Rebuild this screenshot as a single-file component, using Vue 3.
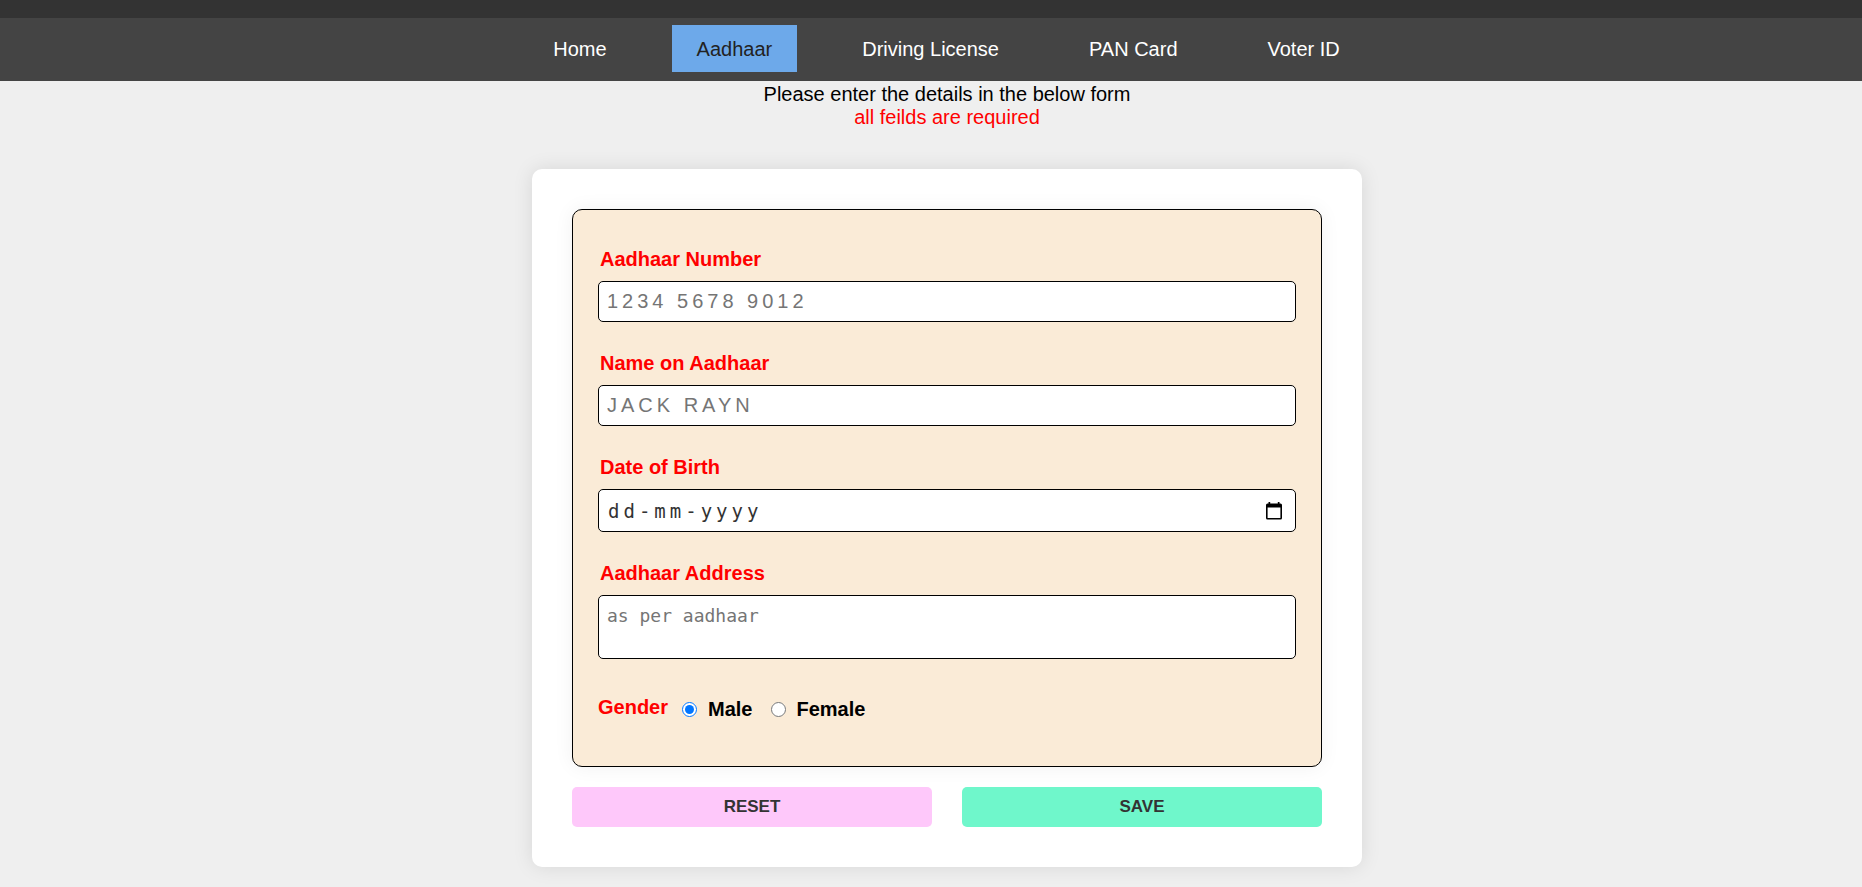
<script setup>
import { ref } from 'vue'

const links = ['Home', 'Aadhaar', 'Driving License', 'PAN Card', 'Voter ID']
const active = ref('Aadhaar')
const blank = { number: '', name: '', dob: '', address: '', gender: 'male' }
const form = ref({ ...blank })

function reset() {
  form.value = { ...blank }
}
</script>

<template>
  <div class="page">
    <header class="strip"></header>
    <nav class="nav">
      <a
        v-for="link in links"
        :key="link"
        href="#"
        class="nav-link"
        :class="{ active: link === active }"
        @click.prevent="active = link"
      >{{ link }}</a>
    </nav>

    <main class="content">
      <div class="intro">
        <p>Please enter the details in the below form</p>
        <p class="required">all feilds are required</p>
      </div>

      <form class="card" @submit.prevent>
        <div class="panel">
          <div class="field">
            <label for="number">Aadhaar Number</label>
            <input id="number" v-model="form.number" class="spaced" type="text" placeholder="1234 5678 9012" />
          </div>
          <div class="field">
            <label for="name">Name on Aadhaar</label>
            <input id="name" v-model="form.name" class="spaced" type="text" placeholder="JACK RAYN" />
          </div>
          <div class="field">
            <label for="dob">Date of Birth</label>
            <div class="date-box">
              <input id="dob" v-model="form.dob" class="date" type="text" placeholder="dd-mm-yyyy" />
              <button type="button" class="picker" aria-label="Show date picker">
                <svg width="20" height="20" viewBox="0 0 20 20">
                  <path d="M4.500 1h1.700v1.500h7.600V1h1.700v1.500h1A1.500 1.500 0 0 1 18 4v13a1.500 1.500 0 0 1-1.500 1.500h-13A1.500 1.500 0 0 1 2 17V4a1.500 1.500 0 0 1 1.500-1.500h1zM3.600 6.500V17h12.800V6.500z" fill="#000" fill-rule="evenodd" />
                </svg>
              </button>
            </div>
          </div>
          <div class="field">
            <label for="address">Aadhaar Address</label>
            <textarea id="address" v-model="form.address" placeholder="as per aadhaar"></textarea>
          </div>
          <div class="gender" role="radiogroup" aria-labelledby="gender-title">
            <span id="gender-title" class="gender-title">Gender</span>
            <div class="options">
              <label class="option"><input v-model="form.gender" type="radio" name="gender" value="male" />Male</label>
              <label class="option"><input v-model="form.gender" type="radio" name="gender" value="female" />Female</label>
            </div>
          </div>
        </div>
        <div class="actions">
          <button type="button" class="reset" @click="reset">RESET</button>
          <button type="submit" class="save">SAVE</button>
        </div>
      </form>
    </main>
  </div>
</template>

<style>
body {
  background: #efefef;
}
</style>

<style scoped>
* {
  box-sizing: border-box;
}
.page {
  font-family: "Liberation Sans", Arial, sans-serif;
  font-size: 20px;
  line-height: 23px;
  color: #000;
}
.strip {
  height: 18px;
  background: #333;
}
.nav {
  display: flex;
  justify-content: center;
  gap: 40px;
  padding: 7px 0 9px 31px;
  background: #444;
}
.nav-link {
  padding: 13px 25px 11px;
  color: #fff;
  text-decoration: none;
}
.nav-link.active {
  background: #6da9ea;
  color: #222;
}
.content {
  padding: 2px 0 20px 32px;
}
.intro {
  text-align: center;
}
.intro p {
  margin: 0;
}
.intro .required {
  color: #f00;
}
.card {
  max-width: 830px;
  margin: 40px auto 0;
  padding: 40px;
  border-radius: 10px;
  background: #fff;
  box-shadow: 0 0 20px rgba(0, 0, 0, 0.1);
}
.panel {
  padding: 38px 25px 45px;
  border: 1px solid #000;
  border-radius: 10px;
  background: #faebd7;
  box-shadow: 0 0 20px rgba(0, 0, 0, 0.06);
}
.field {
  display: flex;
  flex-direction: column;
  gap: 10px;
  margin-bottom: 30px;
}
.field label {
  align-self: flex-start;
  margin-left: 2px;
  font-weight: 700;
  color: #f00;
}
.spaced,
.date-box,
textarea {
  display: block;
  width: 100%;
  margin: 0;
  border: 1px solid #000;
  border-radius: 5px;
  background: #fff;
  color: #333;
}
.spaced {
  height: 41px;
  padding: 0 8px;
  font: 20px "Liberation Sans", Arial, sans-serif;
  letter-spacing: 4px;
}
.date-box {
  display: flex;
  align-items: center;
  height: 43px;
  padding: 0 11px 0 9px;
}
.date {
  flex: 1;
  min-width: 0;
  padding: 0;
  border: 0;
  background: none;
  color: #333;
  font: 19px "DejaVu Sans Mono", monospace;
  letter-spacing: 4px;
}
.picker {
  display: flex;
  padding: 0;
  border: 0;
  background: none;
}
textarea {
  height: 64px;
  padding: 9px 8px;
  resize: none;
  font: 18px "DejaVu Sans Mono", monospace;
}
::placeholder {
  color: #757575;
  opacity: 1;
}
.date::placeholder {
  color: #333;
}
.gender {
  display: flex;
  gap: 14px;
  padding-top: 7px;
  font-weight: 700;
}
.gender-title {
  color: #f00;
}
.options {
  display: flex;
  gap: 18px;
  padding-top: 2px;
}
.option {
  display: flex;
  align-items: center;
  gap: 11px;
}
.option input {
  width: 15px;
  height: 15px;
  margin: 0;
}
.actions {
  display: flex;
  gap: 30px;
  margin-top: 20px;
}
.actions button {
  flex: 1;
  height: 40px;
  padding: 0;
  border: 0;
  border-radius: 5px;
  color: #333;
  font: 700 17px "Liberation Sans", Arial, sans-serif;
}
.reset {
  background: #fec8fa;
}
.save {
  background: #6ff7cb;
}
</style>
